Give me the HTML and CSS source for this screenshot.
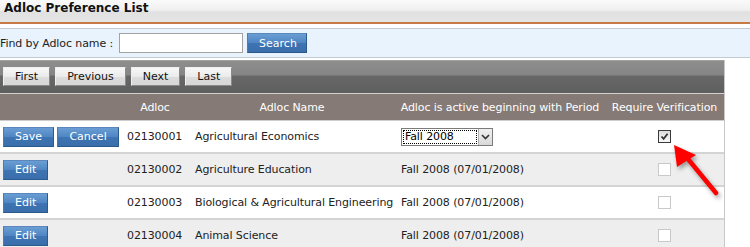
FILE: index.html
```html
<!DOCTYPE html>
<html lang="en">

<head>
    <meta charset="UTF-8">
    <title>Adloc Preference List</title>
    <link rel="stylesheet" href="styles.css">
</head>

<body>
    <div class="title-bar">Adloc Preference List</div>

    <!-- Search -->
    <div class="search-bar">
        <label for="findName">Find by Adloc name :</label>
        <input id="findName" class="search-input" type="text">
        <button class="btn-blue btn-search">Search</button>
    </div>

    <div class="grid">
        <div class="pager">
            <button class="btn-pager">First</button>
            <button class="btn-pager">Previous</button>
            <button class="btn-pager">Next</button>
            <button class="btn-pager">Last</button>
        </div>

        <table class="adloc-table">
            <colgroup>
                <col class="col-actions">
                <col class="col-code">
                <col class="col-name">
                <col class="col-period">
                <col class="col-verify">
            </colgroup>
            <thead>
                <tr>
                    <th></th>
                    <th>Adloc</th>
                    <th>Adloc Name</th>
                    <th>Adloc is active beginning with Period</th>
                    <th>Require Verification</th>
                </tr>
            </thead>
            <tbody>
                <tr>
                    <td class="actions">
                        <button class="btn-blue btn-row">Save</button>
                        <button class="btn-blue btn-row">Cancel</button>
                    </td>
                    <td>02130001</td>
                    <td>Agricultural Economics</td>
                    <td>
                        <div class="period-select">
                            <span class="period-value">Fall 2008</span>
                            <span class="period-arrow">
                                <svg width="9" height="6" viewBox="0 0 9 6"><path d="M1 1 L4.5 4.5 L8 1" fill="none" stroke="#333" stroke-width="1.6"/></svg>
                            </span>
                        </div>
                    </td>
                    <td class="verify">
                        <span class="check is-checked">
                            <svg width="9" height="9" viewBox="0 0 9 9"><path d="M1.5 4.5 L3.6 6.8 L7.6 1.8" fill="none" stroke="#333" stroke-width="1.8"/></svg>
                        </span>
                    </td>
                </tr>
                <tr>
                    <td class="actions"><button class="btn-blue btn-row">Edit</button></td>
                    <td>02130002</td>
                    <td>Agriculture Education</td>
                    <td>Fall 2008 (07/01/2008)</td>
                    <td class="verify"><span class="check"></span></td>
                </tr>
                <tr>
                    <td class="actions"><button class="btn-blue btn-row">Edit</button></td>
                    <td>02130003</td>
                    <td>Biological &amp; Agricultural Engineering</td>
                    <td>Fall 2008 (07/01/2008)</td>
                    <td class="verify"><span class="check"></span></td>
                </tr>
                <tr>
                    <td class="actions"><button class="btn-blue btn-row">Edit</button></td>
                    <td>02130004</td>
                    <td>Animal Science</td>
                    <td>Fall 2008 (07/01/2008)</td>
                    <td class="verify"><span class="check"></span></td>
                </tr>
            </tbody>
        </table>
    </div>

    <!-- red callout pointing at the checkbox -->
    <svg class="callout-arrow" width="60" height="60" viewBox="0 0 60 60">
        <line x1="20" y1="19" x2="48" y2="53" stroke="#f00" stroke-width="4.5" stroke-linecap="round"/>
        <polygon points="6,5 9,27 28,15" fill="#f00"/>
    </svg>
</body>

</html>
```

FILE: styles.css
```css
body {
  margin: 0;
  position: relative;
  font-family: Tahoma, "DejaVu Sans", sans-serif;
  font-size: 11px;
  letter-spacing: -0.1px;
  color: #222;
  background: #fff;
}

.title-bar {
  height: 22px;
  padding: 0 4px;
  line-height: 17px;
  font-size: 12px;
  font-weight: bold;
  letter-spacing: 0;
  color: #111;
  background: linear-gradient(#fafafa, #f0f0f0 45%, #e1e1e1 55%, #e5e5e5);
  border-bottom: 2px solid #c67b45;
  margin-bottom: 4px;
}

.search-bar {
  display: flex;
  align-items: center;
  height: 28px;
  background: #e8f3fd;
  border-top: 1px solid #c3cad2;
  border-bottom: 1px solid #c3cad2;
  margin-bottom: 2px;
}

.search-bar label {
  margin-right: 6px;
}

.search-input {
  box-sizing: border-box;
  width: 124px;
  height: 20px;
  margin: 0;
  border: 1px solid #a3a3a3;
  background: #fff;
}

.btn-blue {
  box-sizing: border-box;
  height: 20px;
  margin: 0;
  padding: 0 11px;
  font: inherit;
  color: #fff;
  background: linear-gradient(#6a9dd3, #4e86c3 50%, #3e74b3 52%, #3a6eab);
  border: 1px solid #2b5a8f;
  border-top-color: #5a88bd;
  border-left-color: #4a7bb3;
}

.btn-search {
  width: 60px;
  margin-left: 4px;
}

.grid {
  width: 724px;
  border-right: 1px solid #c8c8c8;
}

.pager {
  display: flex;
  align-items: center;
  gap: 5px;
  height: 33px;
  padding-left: 3px;
  background: linear-gradient(#b4b4b4 0, #8e8e8e 1px, #858585 15px, #686868 16px, #5e5e5e 100%);
}

.btn-pager {
  box-sizing: border-box;
  height: 19px;
  margin: 0;
  padding: 0 11px;
  font: inherit;
  color: #111;
  background: linear-gradient(#f7f7f7, #ebebeb 50%, #dcdcdc 52%, #d7d7d7);
  border: 1px solid;
  border-color: #efefef #8a8a8a #8a8a8a #efefef;
}

.adloc-table {
  width: 724px;
  table-layout: fixed;
  border-collapse: separate;
  border-spacing: 0;
}

.col-actions { width: 121px; }
.col-code { width: 68px; }
.col-name { width: 206px; }
.col-period { width: 210px; }
.col-verify { width: 119px; }

.adloc-table th {
  height: 26px;
  padding: 0 2px;
  font-weight: normal;
  color: #fff;
  white-space: nowrap;
  background: #857a75;
  border-top: 1px solid #d2d2d2;
  border-bottom: 1px solid #cdcdcd;
}

.adloc-table td {
  height: 31px;
  padding: 0 6px;
  white-space: nowrap;
  vertical-align: middle;
  border-bottom: 2px solid #d4d4d4;
}

.adloc-table tbody tr:nth-child(even) td {
  background: #eeeeee;
}

.adloc-table td.actions {
  padding-left: 3px;
  padding-right: 0;
}

.adloc-table td.verify {
  text-align: center;
}

.period-select {
  box-sizing: border-box;
  display: flex;
  width: 92px;
  height: 18px;
  border: 1px solid #7b7b7b;
  background: #fff;
}

.period-value {
  flex: 1;
  padding-left: 2px;
  line-height: 14px;
  color: #000;
  outline: 1px dotted #000;
  outline-offset: -1px;
  margin: 1px;
}

.period-arrow {
  display: flex;
  align-items: center;
  justify-content: center;
  width: 13px;
  background: linear-gradient(#f0f0f0, #d9d9d9);
  border-left: 1px solid #b0b0b0;
}

.check {
  box-sizing: border-box;
  display: inline-flex;
  align-items: center;
  justify-content: center;
  width: 13px;
  height: 13px;
  vertical-align: middle;
  background: #fff;
  border: 1px solid #c9c9c9;
}

.check.is-checked {
  border-color: #3a3a3a;
  background: linear-gradient(#dcdcdc, #f7f7f7);
}

.callout-arrow {
  position: absolute;
  left: 668px;
  top: 140px;
  pointer-events: none;
  filter: drop-shadow(2px 3px 2px rgba(0, 0, 0, 0.35));
}
```
